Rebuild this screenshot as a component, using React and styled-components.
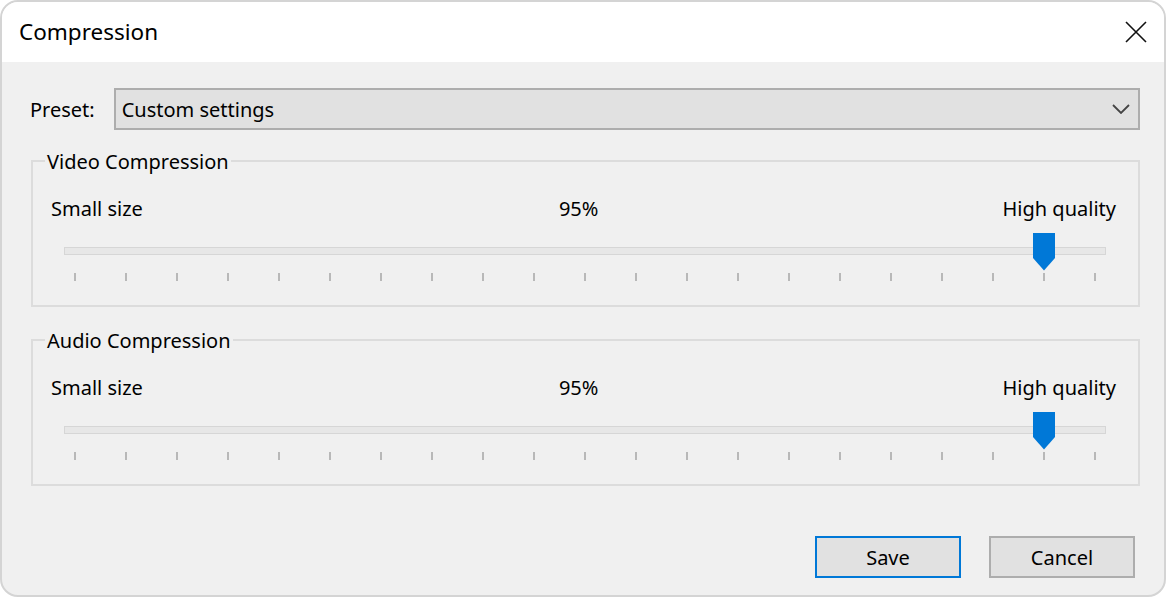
import React from 'react';
import styled, { createGlobalStyle } from 'styled-components';

const GlobalStyle = createGlobalStyle`
  html, body {
    margin: 0;
    padding: 0;
    background: #ffffff;
  }
  body {
    font-family: "Noto Sans", "Open Sans", sans-serif;
    color: #000;
  }
`;

const groups = [
    { title: 'Video Compression', value: 95 },
    { title: 'Audio Compression', value: 95 },
];

const TICKS = 21;

const Slider = ({ value }) => {
    const p = value / 100;
    return (
        <SliderBox>
            <Track />
            <Ticks>
                {Array.from({ length: TICKS }).map((_, i) => (
                    <Tick key={i} />
                ))}
            </Ticks>
            <Thumb style={{ left: `calc(24px + (100% - 45px) * ${p} - 11px)` }}>
                <svg width="22" height="38" viewBox="0 0 22 38">
                    <path d="M0 0 H22 V25 L11 37.5 L0 25 Z" fill="#0078d7" />
                </svg>
            </Thumb>
        </SliderBox>
    );
};

const App = () => {
    return (
        <>
            <GlobalStyle />
            <Window>
                <TitleBar>
                    <Title>Compression</Title>
                    <CloseButton aria-label="Close">
                        <svg width="22" height="22" viewBox="0 0 22 22">
                            <path d="M1 1 L21 21 M21 1 L1 21" stroke="#111" strokeWidth="1.6" fill="none" />
                        </svg>
                    </CloseButton>
                </TitleBar>
                <Body>
                    <PresetRow>
                        <Label>Preset:</Label>
                        <Select>
                            <span>Custom settings</span>
                            <svg width="18" height="10" viewBox="0 0 18 10">
                                <path d="M1 1 L9 9 L17 1" stroke="#444" strokeWidth="1.8" fill="none" />
                            </svg>
                        </Select>
                    </PresetRow>

                    {groups.map((g) => (
                        <Group key={g.title}>
                            <Legend>{g.title}</Legend>
                            <Labels>
                                <span>Small size</span>
                                <Percent>{g.value}%</Percent>
                                <span>High quality</span>
                            </Labels>
                            <Slider value={g.value} />
                        </Group>
                    ))}

                    <ButtonRow>
                        <Button $primary>Save</Button>
                        <Button>Cancel</Button>
                    </ButtonRow>
                </Body>
            </Window>
        </>
    );
};

export default App;

const Window = styled.div`
    box-sizing: border-box;
    width: 1166px;
    height: 597px;
    border: 2px solid #d4d4d4;
    border-radius: 18px;
    overflow: hidden;
    display: flex;
    flex-direction: column;
    background: #f0f0f0;
`;

const TitleBar = styled.div`
    height: 60px;
    background: #ffffff;
    display: flex;
    align-items: center;
    justify-content: space-between;
    padding: 0 17px 0 17px;
    flex-shrink: 0;
`;

const Title = styled.div`
    font-size: 22.5px;
    line-height: 30px;
`;

const CloseButton = styled.div`
    width: 22px;
    height: 22px;
    display: flex;
`;

const Body = styled.div`
    flex: 1;
    padding: 26px 24px 0 27px;
    display: flex;
    flex-direction: column;
`;

const PresetRow = styled.div`
    display: flex;
    align-items: center;
    gap: 19px;
`;

const Label = styled.span`
    font-size: 20px;
    line-height: 27px;
    margin-left: 1px;
`;

const Select = styled.div`
    flex: 1;
    box-sizing: border-box;
    height: 42px;
    background: #e1e1e1;
    border: 2px solid #adadad;
    display: flex;
    align-items: center;
    justify-content: space-between;
    padding: 0 8px 0 6px;
    font-size: 20px;
`;

const Group = styled.fieldset`
    margin: 18px 0 0 2px;
    padding: 22px 22px 24px 18px;
    border: 2px solid #dcdcdc;
    min-width: 0;
    & + & {
        margin-top: 20px;
    }
`;

const Legend = styled.legend`
    font-size: 20px;
    line-height: 26px;
    padding: 0 2px;
    margin-left: -6px;
    position: relative;
    top: 1px;
`;

const Labels = styled.div`
    display: flex;
    justify-content: space-between;
    font-size: 20px;
    line-height: 26px;
`;

const Percent = styled.span`
    margin-left: 12px;
`;

const SliderBox = styled.div`
    position: relative;
    display: flex;
    flex-direction: column;
    margin-top: 11px;
    padding-top: 14px;
`;

const Track = styled.div`
    box-sizing: border-box;
    height: 8px;
    margin: 0 10px 0 13px;
    background: #e7e7e7;
    border: 1px solid #d6d6d6;
`;

const Ticks = styled.div`
    display: flex;
    justify-content: space-between;
    margin-top: 18px;
    padding: 0 20px 0 23px;
`;

const Tick = styled.div`
    width: 2px;
    height: 8px;
    background: #b8b8b8;
`;

const Thumb = styled.div`
    position: absolute;
    top: 0;
    width: 22px;
    height: 38px;
    display: flex;
`;

const ButtonRow = styled.div`
    display: flex;
    justify-content: flex-end;
    gap: 28px;
    margin: 50px 5px 0 0;
`;

const Button = styled.div`
    box-sizing: border-box;
    width: 146px;
    height: 42px;
    display: flex;
    align-items: center;
    justify-content: center;
    background: #e1e1e1;
    border: 2px solid ${(p) => (p.$primary ? '#0078d7' : '#adadad')};
    font-size: 20px;
`;
